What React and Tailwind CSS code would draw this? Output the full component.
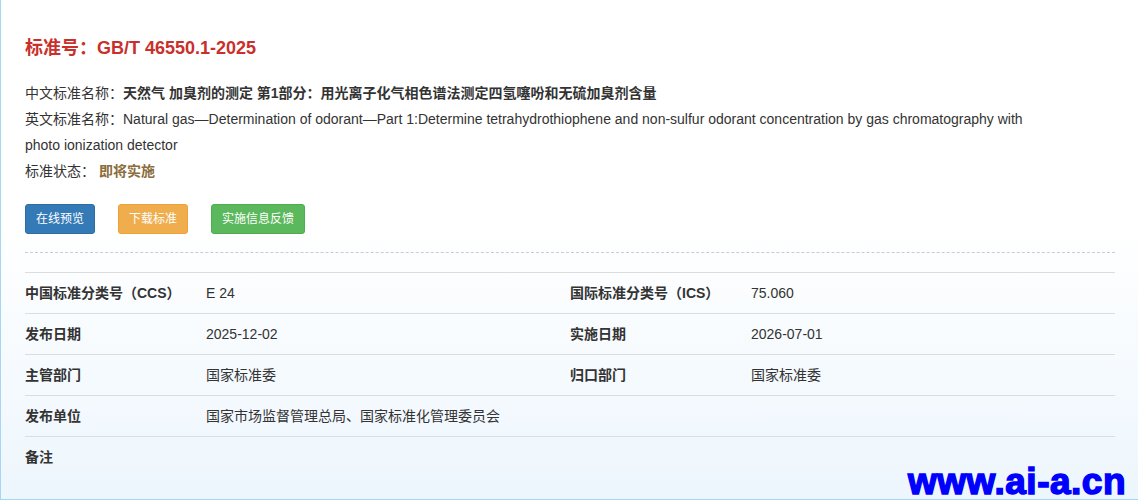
export default function App() {
  const rows = [
    [
      ["中国标准分类号（CCS）", "E 24"],
      ["国际标准分类号（ICS）", "75.060"],
    ],
    [
      ["发布日期", "2025-12-02"],
      ["实施日期", "2026-07-01"],
    ],
    [
      ["主管部门", "国家标准委"],
      ["归口部门", "国家标准委"],
    ],
  ]

  return (
    <div className="relative w-[1138px] h-[500px] overflow-hidden border-l border-b border-[#a6d6f6] bg-gradient-to-b from-white via-white via-45% to-[#edf6fd] font-['Liberation_Sans','Noto_Sans_CJK_SC',sans-serif] text-[#333]">
      <div className="pl-6 pr-[23px] pt-[34px]">
        <h2 className="text-[18px] leading-[28px] font-bold text-[#c9302c]">
          标准号：GB/T 46550.1-2025
        </h2>

        <div className="mt-[18px] w-[1015px] text-[14px] leading-[26px]">
          <p>
            中文标准名称：
            <span className="font-bold">
              天然气 加臭剂的测定 第1部分：用光离子化气相色谱法测定四氢噻吩和无硫加臭剂含量
            </span>
          </p>
          <p>
            英文标准名称：Natural gas—Determination of odorant—Part 1:Determine
            tetrahydrothiophene and non-sulfur odorant concentration by gas
            chromatography with photo ionization detector
          </p>
          <p>
            标准状态：<span className="ml-[4px] font-bold text-[#8a6d3b]">即将实施</span>
          </p>
        </div>

        <div className="mt-[20px] flex gap-[23px] text-[12px] text-white">
          <button className="h-[30px] px-[10px] rounded-[3px] border border-[#2e6da4] bg-[#337ab7]">
            在线预览
          </button>
          <button className="h-[30px] px-[10px] rounded-[3px] border border-[#eea236] bg-[#f0ad4e]">
            下载标准
          </button>
          <button className="h-[30px] px-[10px] rounded-[3px] border border-[#4cae4c] bg-[#5cb85c]">
            实施信息反馈
          </button>
        </div>

        <div className="mt-[18px] border-t border-dashed border-[#cccccc]" />

        <div className="mt-[19px] border-t border-[#dddddd] text-[14px]">
          {rows.map((r, i) => (
            <div
              key={i}
              className="grid grid-cols-[181px_364px_181px_364px] h-[41px] items-center border-b border-[#dddddd]"
            >
              <div className="font-bold">{r[0][0]}</div>
              <div>{r[0][1]}</div>
              <div className="font-bold">{r[1][0]}</div>
              <div>{r[1][1]}</div>
            </div>
          ))}
          <div className="grid grid-cols-[181px_909px] h-[41px] items-center border-b border-[#dddddd]">
            <div className="font-bold">发布单位</div>
            <div>国家市场监督管理总局、国家标准化管理委员会</div>
          </div>
          <div className="grid grid-cols-[181px_909px] h-[40px] items-center">
            <div className="font-bold">备注</div>
            <div></div>
          </div>
        </div>
      </div>

      <div className="absolute right-[12px] bottom-[2px] text-[37px] leading-[30px] font-bold text-[#0000ff] [-webkit-text-stroke:1.5px_#0000ff] tracking-[0.5px]">
        www.ai-a.cn
      </div>
    </div>
  )
}
